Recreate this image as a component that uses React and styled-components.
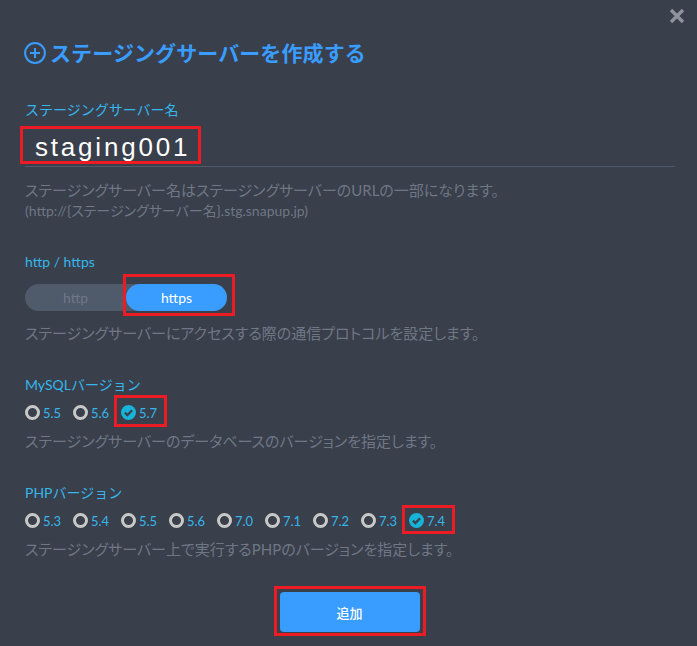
import React from 'react';
import styled, { createGlobalStyle } from 'styled-components';

const GlobalStyle = createGlobalStyle`
  html, body {
    margin: 0;
    background: #393f4b;
  }
  * {
    box-sizing: border-box;
  }
`;

const Modal = styled.div`
  position: relative;
  width: 697px;
  height: 646px;
  padding: 38px 22px 0 25px;
  background: #393f4b;
  font-family: "Lato", "Noto Sans CJK JP", sans-serif;
  overflow: hidden;
`;

const Close = styled.svg`
  position: absolute;
  top: 8px;
  right: 12px;
  width: 16px;
  height: 16px;
`;

const Title = styled.h1`
  display: flex;
  align-items: center;
  gap: 4px;
  height: 30px;
  margin: 0 0 32px -1px;
  color: #399cff;
  font-size: 21px;
  line-height: 30px;
  font-weight: 700;
  letter-spacing: 0.1px;
`;

const Section = styled.section`
  margin-bottom: ${(props) => props.$gap}px;
`;

const Label = styled.div`
  height: 20px;
  color: #35b6ec;
  font-size: 14px;
  line-height: 20px;
`;

const Marked = styled.span`
  position: relative;
  display: inline-flex;
  &::after {
    content: '';
    position: absolute;
    top: ${(props) => props.$t}px;
    right: ${(props) => props.$r}px;
    bottom: ${(props) => props.$b}px;
    left: ${(props) => props.$l}px;
    border: 3px solid #ed1c24;
    pointer-events: none;
  }
`;

const NameField = styled.div`
  display: flex;
  height: 38px;
  margin-top: 9px;
  padding-left: 10px;
  border-bottom: 1px solid #4f5a6b;
`;

const NameValue = styled.span`
  color: #fff;
  font-family: "Liberation Sans", sans-serif;
  font-size: 26px;
  line-height: 36px;
  letter-spacing: 2.8px;
`;

const Help = styled.p`
  margin: ${(props) => props.$top || 0}px 0 0;
  color: #6f7785;
  font-size: 15px;
  line-height: 22px;
  font-feature-settings: "palt";
`;

const SmallHelp = styled.p`
  margin: 0;
  color: #6f7785;
  font-size: 14px;
  line-height: 20px;
  font-feature-settings: "palt";
`;

const Toggle = styled.div`
  display: flex;
  width: 202px;
  height: 27px;
  margin-top: 12px;
  border-radius: 14px;
  background: #4f5a6b;
`;

const ToggleItem = styled.div`
  width: 101px;
  height: 27px;
  border-radius: 14px;
  text-align: center;
  color: ${(props) => (props.$active ? '#fff' : '#6f7785')};
  background: ${(props) => (props.$active ? '#399cff' : 'transparent')};
  font-size: 14px;
  line-height: 27px;
`;

const RadioRow = styled.div`
  display: flex;
  height: 20px;
  margin-top: 7px;
`;

const Radio = styled.div`
  display: flex;
  align-items: center;
  gap: 3px;
  width: 48px;
  height: 20px;
  flex: none;
`;

const Ring = styled.span`
  width: 15px;
  height: 15px;
  flex: none;
  border: 3px solid #c8c8c8;
  border-radius: 50%;
`;

const RadioText = styled.span`
  color: #35b6ec;
  font-size: 13px;
  line-height: 20px;
  padding-top: 1px;
`;

const Footer = styled.div`
  display: flex;
  justify-content: center;
  margin: 32px 1px 0 0;
`;

const AddButton = styled.button`
  width: 140px;
  height: 40px;
  padding: 0;
  border: none;
  border-radius: 4px;
  background: #399cff;
  color: #fff;
  font-family: inherit;
  font-size: 13px;
  font-weight: 500;
`;

const CheckIcon = () => (
  <svg width="15" height="15" viewBox="0 0 15 15" style={{ flex: 'none' }}>
    <circle cx="7.5" cy="7.5" r="7.5" fill="#17b3d9" />
    <path d="M3.9 7.6 L6.4 10.1 L11.1 5.3" fill="none" stroke="#393f4b" strokeWidth="2.2" />
  </svg>
);

const Versions = ({ items, selected, boxTop, boxBottom }) => (
  <RadioRow>
    {items.map((v) => {
      if (v === selected) {
        return (
          <Marked key={v} $t={boxTop} $r={2} $b={boxBottom} $l={-7}>
            <Radio>
              <CheckIcon />
              <RadioText>{v}</RadioText>
            </Radio>
          </Marked>
        );
      }
      return (
        <Radio key={v}>
          <Ring />
          <RadioText>{v}</RadioText>
        </Radio>
      );
    })}
  </RadioRow>
);

const App = () => {
  return (
    <Modal>
      <GlobalStyle />
      <Close viewBox="0 0 16 16">
        <path d="M2 2 L14 14 M14 2 L2 14" stroke="#8d929b" strokeWidth="3.4" fill="none" />
      </Close>
      <Title>
        <svg width="22" height="22" viewBox="0 0 22 22">
          <circle cx="11" cy="11" r="9.9" fill="none" stroke="#399cff" strokeWidth="2" />
          <path d="M11 6 V16 M6 11 H16" stroke="#399cff" strokeWidth="2" fill="none" />
        </svg>
        ステージングサーバーを作成する
      </Title>

      <Section $gap={31}>
        <Label>ステージングサーバー名</Label>
        <NameField>
          <Marked $t={-3} $r={-11} $b={2} $l={-15}>
            <NameValue>staging001</NameValue>
          </Marked>
        </NameField>
        <Help $top={12}>ステージングサーバー名はステージングサーバーのURLの一部になります。</Help>
        <SmallHelp>(http://{'{'}ステージングサーバー名{'}'}.stg.snapup.jp)</SmallHelp>
      </Section>

      <Section $gap={31}>
        <Label>http / https</Label>
        <Toggle>
          <ToggleItem>http</ToggleItem>
          <Marked $t={-10} $r={-8} $b={-5} $l={-3}>
            <ToggleItem $active>https</ToggleItem>
          </Marked>
        </Toggle>
        <Help $top={11}>ステージングサーバーにアクセスする際の通信プロトコルを設定します。</Help>
      </Section>

      <Section $gap={31}>
        <Label>MySQLバージョン</Label>
        <Versions items={['5.5', '5.6', '5.7']} selected="5.7" boxTop={-7} boxBottom={-5} />
        <Help $top={8}>ステージングサーバーのデータベースのバージョンを指定します。</Help>
      </Section>

      <Section $gap={0}>
        <Label>PHPバージョン</Label>
        <Versions
          items={['5.3', '5.4', '5.5', '5.6', '7.0', '7.1', '7.2', '7.3', '7.4']}
          selected="7.4"
          boxTop={-5}
          boxBottom={-4}
        />
        <Help $top={8}>ステージングサーバー上で実行するPHPのバージョンを指定します。</Help>
      </Section>

      <Footer>
        <Marked $t={-6} $r={-6} $b={-4} $l={-6}>
          <AddButton>追加</AddButton>
        </Marked>
      </Footer>
    </Modal>
  );
};

export default App;
